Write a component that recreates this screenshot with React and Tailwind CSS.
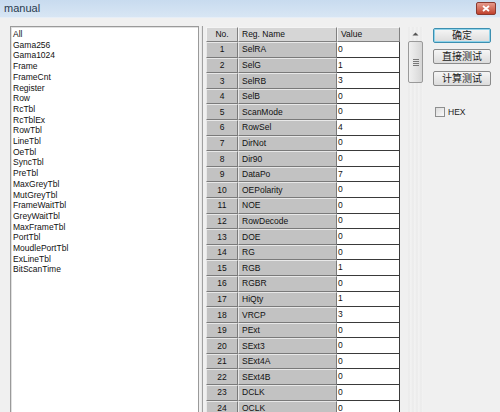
import React from "react";

const items = ["All","Gama256","Gama1024","Frame","FrameCnt","Register","Row","RcTbl","RcTblEx","RowTbl","LineTbl","OeTbl","SyncTbl","PreTbl","MaxGreyTbl","MutGreyTbl","FrameWaitTbl","GreyWaitTbl","MaxFrameTbl","PortTbl","MoudlePortTbl","ExLineTbl","BitScanTime"];

const rows = [
  ["SelRA","0"],["SelG","1"],["SelRB","3"],["SelB","0"],["ScanMode","0"],["RowSel","4"],["DirNot","0"],["Dir90","0"],["DataPo","7"],["OEPolarity","0"],["NOE","0"],["RowDecode","0"],["DOE","0"],["RG","0"],["RGB","1"],["RGBR","0"],["HiQty","1"],["VRCP","3"],["PExt","0"],["SExt3","0"],["SExt4A","0"],["SExt4B","0"],["DCLK","0"],["OCLK","0"]
];

function Btn({ children, def }) {
  return (
    <div className={"w-[58px] h-[15px] rounded-[2px] flex items-center justify-center text-[10px] text-[#222] bg-gradient-to-b from-[#f6f6f6] to-[#dcdcdc] " + (def ? "border border-[#3c8fb0] shadow-[inset_0_0_0_1px_#8fd3ea]" : "border border-[#8a8a8a]")}>
      {children}
    </div>
  );
}

export default function App() {
  return (
    <div className="w-[500px] h-[412px] overflow-hidden bg-[#f0f0f0] flex flex-col" style={{ fontFamily: '"Liberation Sans", "Noto Sans CJK SC", sans-serif' }}>
      <div className="h-[18px] shrink-0 bg-gradient-to-b from-[#c8dbef] to-[#d8e6f4] flex items-center justify-between pl-[4px] pr-[4px] border-b border-[#e6eef7]">
        <span className="text-[11px] text-[#2a3b4f] leading-none">manual</span>
        <div className="w-[20px] h-[13px] rounded-[2px] bg-gradient-to-b from-[#e59a8c] to-[#c0402c] border border-[#8a3a30] flex items-center justify-center">
          <svg width="8" height="7" viewBox="0 0 8 7"><path d="M1 1 L7 6 M7 1 L1 6" stroke="#fff" strokeWidth="1.8" /></svg>
        </div>
      </div>
      <div className="flex-1 flex pt-[8px] pl-[10px] min-h-0">
        <div className="w-[189px] h-[420px] shrink-0 bg-white border border-[#9a9a9a] shadow-[inset_1px_1px_0_#e0e0e0] pt-[2px] pl-[2px] text-[8.5px] leading-[10.7px] text-[#111]">
          {items.map((t) => (
            <div key={t}>{t}</div>
          ))}
        </div>
        <div className="ml-[3px] w-[224px] shrink-0 border-l border-[#a0a0a0] shadow-[-1px_0_0_#e8e8e8] pl-[3px] pt-[1px] flex">
          <div className="w-[195px] shrink-0 text-[8.5px] text-[#111]">
            <div className="flex h-[15px]">
              <div className="w-[32px] bg-[#d6d6d6] border-t border-l border-[#f4f4f4] border-r border-b border-r-[#808080] border-b-[#808080] flex items-center justify-center">No.</div>
              <div className="w-[99px] bg-[#d6d6d6] border-t border-l border-[#f4f4f4] border-r border-b border-r-[#808080] border-b-[#808080] flex items-center pl-[3px]">Reg. Name</div>
              <div className="w-[63px] bg-[#d6d6d6] border-t border-l border-[#f4f4f4] border-r border-b border-r-[#808080] border-b-[#808080] flex items-center pl-[3px]">Value</div>
            </div>
            {rows.map(([n, v], i) => (
              <div key={n} className="flex h-[15.6px]">
                <div className="w-[32px] bg-[#c2c2c2] border-t border-l border-[#e8e8e8] border-r border-b border-r-[#7a7a7a] border-b-[#7a7a7a] flex items-center justify-center">{i + 1}</div>
                <div className="w-[99px] bg-[#c2c2c2] border-t border-l border-[#e8e8e8] border-r border-b border-r-[#7a7a7a] border-b-[#7a7a7a] flex items-center pl-[3px]">{n}</div>
                <div className="w-[63px] bg-white border-b border-r border-[#3a3a3a] flex items-center pl-[1px]">{v}</div>
              </div>
            ))}
          </div>
          <div className="ml-[6px] w-[17px] shrink-0 flex flex-col items-center bg-[repeating-linear-gradient(90deg,#f2f2f2_0px,#eaeaea_2px,#f4f4f4_4px)]">
            <div className="h-[14px] flex items-center justify-center">
              <svg width="7" height="4" viewBox="0 0 7 4"><path d="M0.5 3.5 L3.5 0.5 L6.5 3.5 Z" fill="#555" /></svg>
            </div>
            <div className="w-[15px] h-[42px] rounded-[2px] border border-[#9a9a9a] bg-gradient-to-r from-[#f0f0f0] via-[#e4e4e4] to-[#d6d6d6] flex flex-col items-center justify-center gap-[1px]">
              <div className="w-[6px] h-px bg-[#777]" />
              <div className="w-[6px] h-px bg-[#777]" />
              <div className="w-[6px] h-px bg-[#777]" />
              <div className="w-[6px] h-px bg-[#777]" />
            </div>
          </div>
        </div>
        <div className="ml-[7px] flex flex-col pt-[2px]">
          <Btn def>确定</Btn>
          <div className="h-[6px]" />
          <Btn>直接测试</Btn>
          <div className="h-[7px]" />
          <Btn>计算测试</Btn>
          <div className="mt-[20px] ml-[2px] flex items-center gap-[3px]">
            <div className="w-[10px] h-[10px] border border-[#8e8f8f] bg-gradient-to-br from-[#dcdcdc] to-[#fafafa]" />
            <span className="text-[8.5px] text-[#222]">HEX</span>
          </div>
        </div>
      </div>
    </div>
  );
}
